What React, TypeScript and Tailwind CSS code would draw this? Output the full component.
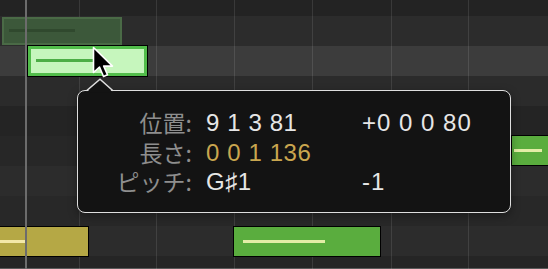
const rows = [
  { h: 'h-[16px]', bg: 'bg-[#232323]' },
  { h: 'h-[30px]', bg: 'bg-[#2c2c2c]' },
  { h: 'h-[30px]', bg: 'bg-[#3c3c3c]' },
  { h: 'h-[30px]', bg: 'bg-[#2b2b2b]' },
  { h: 'h-[30px]', bg: 'bg-[#242424]' },
  { h: 'h-[30px]', bg: 'bg-[#272727]' },
  { h: 'h-[30px]', bg: 'bg-[#2c2c2c]' },
  { h: 'h-[30px]', bg: 'bg-[#282828]' },
  { h: 'h-[30px]', bg: 'bg-[#2c2c2c]' },
  { h: 'flex-1', bg: 'bg-[#252525]' },
];

const gridLines = [
  'left-[79px]',
  'left-[156px]',
  'left-[234px]',
  'left-[312px]',
  'left-[391px]',
  'left-[468px]',
];

const labelFont = { fontFamily: '"Noto Sans CJK JP", "Liberation Sans", sans-serif' };
const valueFont = { fontFamily: '"Liberation Sans", "DejaVu Sans", sans-serif' };

function Note({ pos, fill, line, lineBox }: { pos: string; fill: string; line: string; lineBox: string }) {
  return (
    <div className={`absolute h-[31px] border border-black ${pos} ${fill}`}>
      <div className={`absolute h-[3px] top-[13px] ${lineBox} ${line}`} />
    </div>
  );
}

function Cursor() {
  return (
    <svg className="absolute left-[92px] top-[46px]" width="24" height="34" viewBox="-1.5 -1.5 24 34">
      <path
        d="M0 0 L0 25 L6 19.5 L10 29 L14 27.3 L10.2 18.6 L19 18.6 Z"
        fill="#000"
        stroke="#fff"
        strokeWidth="1.6"
        strokeLinejoin="round"
      />
    </svg>
  );
}

export default function App() {
  return (
    <div className="relative w-[548px] h-[269px] overflow-hidden bg-[#232323]">
      <div className="flex flex-col h-full">
        {rows.map((r, i) => (
          <div key={i} className={`${r.h} ${r.bg}`} />
        ))}
      </div>
      <div className="absolute left-0 right-0 bottom-0 h-px bg-[#5a5a5a]" />

      {gridLines.map((l) => (
        <div key={l} className={`absolute top-0 bottom-0 w-px bg-white/10 ${l}`} />
      ))}

      {/* ghost of the note before the drag */}
      <div className="absolute left-[2px] top-[17px] w-[120px] h-[28px] bg-[#3c583a] border-2 border-[#4a6a46]">
        <div className="absolute left-[5px] top-[10px] w-[66px] h-[3px] bg-[#30492e]" />
      </div>

      {/* selected note */}
      <div className="absolute left-[27px] top-[45px] w-[121px] h-[32px] bg-black p-px">
        <div className="relative h-full border-[3px] border-[#52bd4b] bg-[#c6f6bd]">
          <div className="absolute left-[5px] top-[10px] w-[60px] h-[3px] bg-[#4cae46]" />
        </div>
      </div>

      <Note pos="left-[-1px] top-[226px] w-[90px]" fill="bg-[#b5a845]" line="bg-[#f3e8a8]" lineBox="left-0 w-[25px]" />
      <Note pos="left-[233px] top-[226px] w-[148px]" fill="bg-[#5aad3e]" line="bg-[#e3eda6]" lineBox="left-[9px] w-[82px]" />
      <Note pos="left-[511px] top-[135px] w-[40px]" fill="bg-[#5aad3e]" line="bg-[#e3eda6]" lineBox="left-[2px] w-[28px]" />

      <div className="absolute left-[25px] top-0 bottom-0 w-[2px] bg-[#6c6c6c]" />

      {/* help tag */}
      <div className="absolute left-[77px] top-[90px] w-[434px] h-[123px] rounded-[8px] border-[1.5px] border-[#dedede] bg-[#131313] shadow-[0_3px_10px_rgba(0,0,0,0.35)]">
        <div className="grid grid-cols-[114px_142px_1fr] gap-x-[14px] pt-[17px] leading-[29.5px]">
          <div className="text-right text-[23px] text-[#8e8e8e]" style={labelFont}>位置:</div>
          <div className="text-[24px] tracking-[0.6px] text-[#e6e6e6]" style={valueFont}>9 1 3 81</div>
          <div className="text-[24px] tracking-[1px] text-[#e6e6e6]" style={valueFont}>+0 0 0 80</div>

          <div className="text-right text-[23px] text-[#8e8e8e]" style={labelFont}>長さ:</div>
          <div className="text-[24px] tracking-[0.6px] text-[#c9a64f]" style={valueFont}>0 0 1 136</div>
          <div />

          <div className="text-right text-[23px] text-[#8e8e8e]" style={labelFont}>ピッチ:</div>
          <div className="text-[24px] tracking-[0.6px] text-[#e6e6e6]" style={valueFont}>G♯1</div>
          <div className="text-[24px] tracking-[1px] text-[#e6e6e6]" style={valueFont}>-1</div>
        </div>
      </div>
      <svg className="absolute left-[86px] top-[78px]" width="28" height="15" viewBox="0 0 28 15">
        <path d="M0.5 14.5 L14 1.2 L27 14.5 Z" fill="#131313" />
        <path d="M0.5 12.8 L14 1.2 L27 12.8" fill="none" stroke="#dedede" strokeWidth="1.5" />
      </svg>

      <Cursor />
    </div>
  );
}
